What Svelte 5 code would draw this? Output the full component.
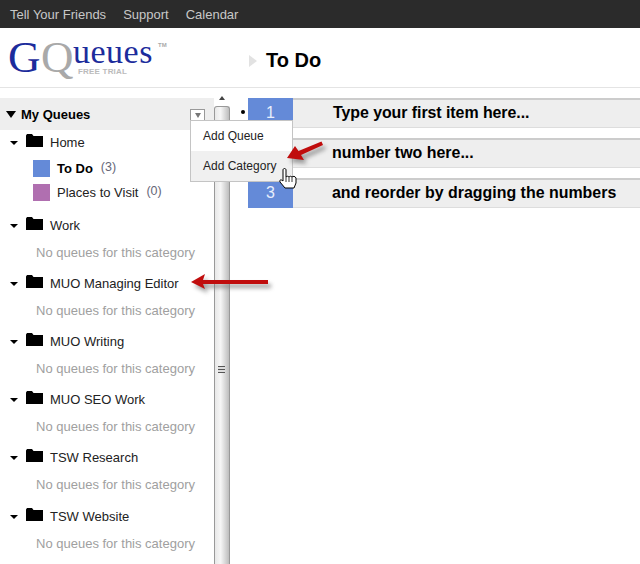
<script>
	const categories = [
		{ name: 'Home', queues: [{ name: 'To Do', count: 3, color: '#648ad8', active: true }, { name: 'Places to Visit', count: 0, color: '#b06fb0' }] },
		{ name: 'Work', queues: [] },
		{ name: 'MUO Managing Editor', queues: [] },
		{ name: 'MUO Writing', queues: [] },
		{ name: 'MUO SEO Work', queues: [] },
		{ name: 'TSW Research', queues: [] },
		{ name: 'TSW Website', queues: [] }
	];
	const items = ['Type your first item here...', 'number two here...', 'and reorder by dragging the numbers'];
</script>

<div class="page">
	<nav class="topbar">
		<span>Tell Your Friends</span>
		<span>Support</span>
		<span>Calendar</span>
	</nav>

	<header class="header">
		<div class="logo">
			<span class="logo-g">G</span><span class="logo-q">Q</span><span class="logo-rest">ueues</span><span class="tm">TM</span>
			<span class="trial">FREE TRIAL</span>
		</div>
		<span class="title-arrow"></span>
		<h1>To Do</h1>
	</header>

	<div class="body">
		<aside class="sidebar">
			<div class="side-head">
				<span class="tri big"></span>
				<b>My Queues</b>
				<span class="dd"><i></i></span>
			</div>
			{#each categories as cat}
				<section class="cat">
					<div class="cat-row">
						<span class="tri"></span>
						<svg class="folder" width="17" height="13" viewBox="0 0 17 13"><path d="M0 13V1.500L1 0h5l1.500 2H17v11z" fill="#000" /></svg>
						<span>{cat.name}</span>
					</div>
					{#if cat.queues.length}
						<div class="queues">
							{#each cat.queues as q}
								<div class="queue">
									<span class="swatch" style="background: {q.color}"></span>
									<span class:active={q.active}>{q.name}</span>
									<span class="count">({q.count})</span>
								</div>
							{/each}
						</div>
					{:else}
						<div class="none">No queues for this category</div>
					{/if}
				</section>
			{/each}
		</aside>

		<div class="scroll">
			<span class="up"></span>
			<span class="thumb"></span>
			<span class="grip"></span>
		</div>

		<main class="main">
			{#each items as item, i}
				<div class="item">
					<span class="num">{i + 1}</span>
					<span class="text" class:first={i === 0}>{item}</span>
				</div>
			{/each}
			<span class="bullet"></span>
		</main>
	</div>

	<div class="menu">
		<div class="menu-item">Add Queue</div>
		<div class="menu-item hover">Add Category</div>
	</div>

	<svg class="overlay" width="640" height="564" viewBox="0 0 640 564">
		<defs>
			<filter id="shadow" x="-30%" y="-50%" width="160%" height="220%">
				<feGaussianBlur stdDeviation="2" />
			</filter>
		</defs>
		<g filter="url(#shadow)" fill="#777" opacity="0.7" transform="translate(3 4)">
			<path d="M321.500 141.500L323 145L301 155L304 160L287 158L295 146L298.500 151z" />
			<path d="M191 282L205 274L203 280H268V284H203L205 289z" />
		</g>
		<path d="M321.500 141.500L323 145L301 155L304 160L287 158L295 146L298.500 151z" fill="#c00d0d" />
		<path d="M191 282L205 274L203 280H268V284H203L205 289z" fill="#c00d0d" />
		<path d="M283 170c0-2 3-2 3 0v7c1-1 2-1 3 0c1-1 2-1 3 0c1-1 3-1 4 1v5l-2 5h-9l-5-6c-1-2 1-3 3-1z" fill="#fff" stroke="#000" stroke-width="1" stroke-linejoin="round" />
		<path d="M286 177v5M289 177v5M292 177v5" stroke="#000" stroke-width="0.8" />
	</svg>
</div>

<style>
	:global(body) {
		margin: 0;
		background: #fff;
	}
	.page {
		position: relative;
		width: 640px;
		height: 564px;
		overflow: hidden;
		font-family: 'Liberation Sans', Arial, sans-serif;
		font-size: 13px;
		color: #222;
	}
	.topbar {
		height: 28px;
		background: #2b2b2b;
		color: #c8c8c8;
		display: flex;
		align-items: center;
		gap: 17px;
		padding-left: 10px;
	}
	.header {
		height: 59px;
		border-bottom: 1px solid #e4e4e4;
		display: flex;
		align-items: center;
		position: relative;
	}
	.logo {
		position: relative;
		width: 249px;
		height: 59px;
		font-family: 'Liberation Serif', serif;
		color: #1c2c9c;
		flex: none;
	}
	.logo span {
		position: absolute;
	}
	.logo-g {
		left: 8px;
		top: 7px;
		font-size: 45px;
		line-height: 44px;
	}
	.logo-q {
		left: 41px;
		top: 7px;
		font-size: 45px;
		line-height: 44px;
		color: #a9a9a9;
	}
	.logo-rest {
		left: 73px;
		top: 9px;
		font-size: 34px;
		line-height: 30px;
		letter-spacing: 0.500px;
	}
	.tm {
		left: 158px;
		top: 14px;
		font-family: 'Liberation Sans', sans-serif;
		font-size: 6px;
		font-weight: bold;
		color: #aaa;
	}
	.trial {
		left: 78px;
		top: 39px;
		font-family: 'Liberation Sans', sans-serif;
		font-size: 8px;
		line-height: 9px;
		letter-spacing: 0.200px;
		color: #bbb;
		font-weight: bold;
	}
	.title-arrow {
		width: 0;
		height: 0;
		border-left: 8px solid #e2e2e2;
		border-top: 6px solid transparent;
		border-bottom: 6px solid transparent;
		margin-right: 9px;
		position: relative;
		top: 3px;
	}
	h1 {
		margin: 0;
		font-size: 20px;
		font-weight: bold;
		color: #000;
		position: relative;
		top: 3px;
	}
	.body {
		display: flex;
		height: 476px;
	}
	.sidebar {
		width: 214px;
		padding-top: 10px;
		flex: none;
		overflow: hidden;
	}
	.side-head {
		height: 32px;
		background: #eee;
		display: flex;
		align-items: center;
		padding-left: 6px;
		position: relative;
		color: #000;
	}
	.side-head b {
		margin-left: 5px;
	}
	.tri {
		width: 0;
		height: 0;
		border-left: 4px solid transparent;
		border-right: 4px solid transparent;
		border-top: 4px solid #000;
		flex: none;
	}
	.tri.big {
		border-left-width: 5px;
		border-right-width: 5px;
		border-top-width: 7px;
	}
	.dd {
		position: absolute;
		left: 190px;
		top: 11px;
		width: 13px;
		height: 10px;
		border: 1px solid #999;
		background: #fff;
		display: flex;
		align-items: center;
		justify-content: center;
	}
	.dd i {
		width: 0;
		height: 0;
		border-left: 3px solid transparent;
		border-right: 3px solid transparent;
		border-top: 5px solid #777;
	}
	.cat {
		padding-left: 10px;
		padding-bottom: 11px;
	}
	.cat:first-of-type .cat-row {
		margin-bottom: -1px;
	}
	.cat:last-child {
		padding-top: 1px;
	}
	.cat-row {
		display: flex;
		align-items: center;
		height: 25px;
	}
	.folder {
		margin-left: 8px;
		margin-right: 7px;
		position: relative;
		top: -2px;
	}
	.none {
		color: #a0a0a0;
		padding-left: 26px;
		height: 22px;
		line-height: 29px;
	}
	.queues {
		margin: 2px 0 -2px;
	}
	.queue {
		display: flex;
		align-items: center;
		height: 24px;
		padding-left: 23px;
	}
	.swatch {
		width: 17px;
		height: 17px;
		margin-right: 7px;
		flex: none;
	}
	.active {
		font-weight: bold;
		color: #000;
	}
	.count {
		margin-left: 8px;
		color: #667;
		font-size: 12.500px;
		position: relative;
		top: -1px;
	}
	.scroll {
		width: 16px;
		flex: none;
		position: relative;
		box-sizing: border-box;
	}
	.up {
		position: absolute;
		left: 5px;
		top: 8px;
		width: 0;
		height: 0;
		border-left: 3px solid transparent;
		border-right: 3px solid transparent;
		border-bottom: 4px solid #444;
	}
	.thumb {
		display: block;
		position: absolute;
		left: 0;
		right: 0;
		top: 18px;
		bottom: 0;
		box-sizing: border-box;
		border: 1px solid #999;
		border-bottom: 0;
		border-radius: 3px 3px 0 0;
		background: linear-gradient(90deg, #e8e8e8, #f6f6f6 40%, #bdbdbd);
	}
	.grip {
		position: absolute;
		left: 4px;
		top: 278px;
		width: 7px;
		height: 7px;
		background: repeating-linear-gradient(180deg, #555 0 1px, #ddd 1px 3px);
	}
	.main {
		flex: 1;
		position: relative;
		padding-top: 10px;
		padding-left: 18px;
		display: flex;
		flex-direction: column;
		gap: 10px;
	}
	.item {
		height: 27px;
		border-top: 2px solid #ccc;
		border-bottom: 1px solid #ddd;
		background: #eee;
		display: flex;
		align-items: center;
		font-size: 15.950px;
		font-weight: bold;
		color: #000;
	}
	.num {
		width: 45px;
		align-self: stretch;
		margin: -2px 0 -1px;
		background: #648ad8;
		color: #e8eefc;
		font-weight: normal;
		font-size: 16px;
		display: flex;
		align-items: center;
		justify-content: center;
		flex: none;
	}
	.text {
		margin-left: 39px;
		padding-bottom: 1px;
		white-space: nowrap;
	}
	.text.first {
		margin-left: 40px;
		letter-spacing: -0.060px;
	}
	.bullet {
		position: absolute;
		left: 11px;
		top: 22px;
		width: 4px;
		height: 4px;
		border-radius: 50%;
		background: #000;
	}
	.menu {
		position: absolute;
		left: 190px;
		top: 120px;
		width: 101px;
		height: 60px;
		background: #fff;
		border: 1px solid #c4c4c4;
		z-index: 2;
		font-size: 12px;
	}
	.menu-item {
		height: 30px;
		line-height: 30px;
		padding-left: 12px;
		color: #222;
	}
	.menu-item.hover {
		background: #f0f0f0;
	}
	.overlay {
		position: absolute;
		left: 0;
		top: 0;
		z-index: 3;
		pointer-events: none;
	}
</style>
